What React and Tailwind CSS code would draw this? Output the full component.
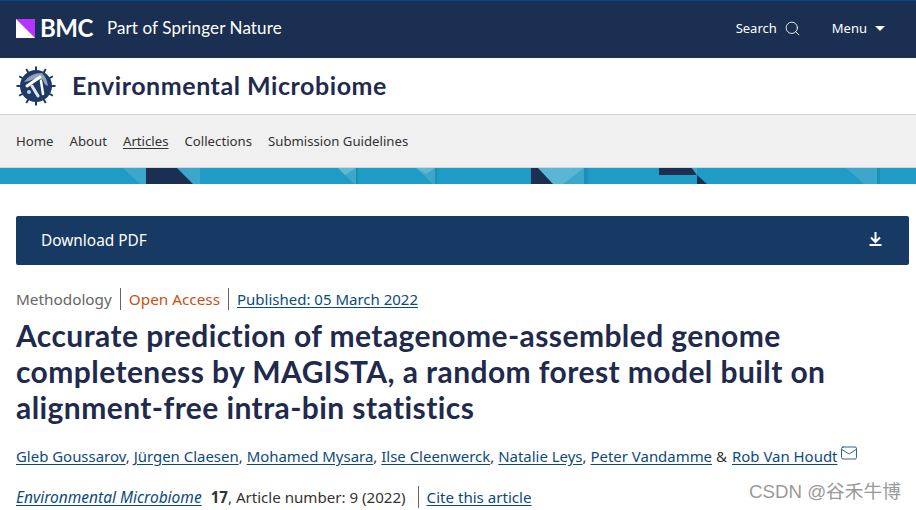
import { Search, Mail } from "lucide-react";

const authors = [
  "Gleb Goussarov",
  "Jürgen Claesen",
  "Mohamed Mysara",
  "Ilse Cleenwerck",
  "Natalie Leys",
];

const body = { fontFamily: "'Noto Sans', sans-serif" };

function Banner() {
  return (
    <svg width="916" height="16" viewBox="0 0 916 16" className="block">
      <rect width="916" height="16" fill="#1e9cc5" />
      <polygon points="123,0 146,0 146,16 140,16" fill="#3ba7cc" />
      <rect x="146" width="54" height="16" fill="#1a2f52" />
      <polygon points="177,0 200,0 200,16 193,16" fill="#3ba7cc" />
      <polygon points="338,0 356,0 356,16 354,16" fill="#3ba7cc" />
      <polygon points="338,0 356,0 345,7" fill="#5fb8d6" />
      <rect x="356" width="2" height="16" fill="#1a90b9" />
      <polygon points="416,0 435,0 435,16 433,16" fill="#3ba7cc" />
      <polygon points="416,0 435,0 426,6" fill="#5fb8d6" />
      <rect x="435" width="2" height="16" fill="#1a90b9" />
      <rect x="531" width="54" height="16" fill="#1a2f52" />
      <polygon points="538,0 585,0 584,16 553,16" fill="#5ab6d5" />
      <polygon points="563,16 584,0 584,16" fill="#3ba7cc" />
      <rect x="584" width="4" height="16" fill="#1a90b9" />
      <polygon points="659,0 692,0 697,7 659,7" fill="#1a2f52" />
      <polygon points="692,0 697,0 697,7" fill="#3ba7cc" />
      <polygon points="697,7 697,16 707,16" fill="#1a2f52" />
      <polygon points="846,0 877,0 877,16 864,16" fill="#3ba7cc" />
      <rect x="877" width="3" height="16" fill="#1a90b9" />
    </svg>
  );
}

function JournalLogo() {
  const teeth = Array.from({ length: 12 }, (_, i) => i * 30);
  return (
    <svg width="40" height="40" viewBox="0 0 40 40">
      {teeth.map((deg) => (
        <rect key={deg} x="19" y="0.5" width="2" height="6" fill="#1f3a66" transform={`rotate(${deg} 20 20)`} />
      ))}
      <circle cx="20" cy="20" r="16" fill="#1f3a66" />
      <path d="M8 16 Q14 7 26 7 Q31 12 32 20 Q28 19 27 14 Q18 12 13 15 Z" fill="#8fa3bf" />
      <path d="M11 20 L24 11" stroke="#fff" strokeWidth="3" strokeLinecap="round" />
      <path d="M16 20 L22 30" stroke="#dfe6ef" strokeWidth="3" strokeLinecap="round" />
      <path d="M25 15 L27 28" stroke="#fff" strokeWidth="2.5" strokeLinecap="round" />
      <circle cx="13" cy="26" r="2" fill="#c4d0df" />
    </svg>
  );
}

export default function App() {
  return (
    <div className="w-[916px] h-[510px] overflow-hidden bg-white relative" style={body}>
      {/* top bar */}
      <div className="h-[58px] bg-[#1a2f52] border-t border-[#004b83] flex items-center justify-between pl-4 pr-[31px] pb-[3px]">
        <div className="flex items-center">
          <svg width="19" height="19" viewBox="0 0 19 19">
            <rect width="19" height="19" fill="#fff" />
            <polygon points="0,0 19,0 19,19" fill="#b833ff" />
          </svg>
          <span className="ml-[5px] text-white text-[24px] font-bold leading-none tracking-[-0.5px]" style={{ fontFamily: "Lato, sans-serif" }}>BMC</span>
          <span className="ml-[14px] text-white text-[17px] tracking-[0.12px]" style={{ fontFamily: "Lato, sans-serif" }}>Part of Springer Nature</span>
        </div>
        <div className="flex items-center text-white text-[13px]">
          <span className="pt-[1px]">Search</span>
          <Search size={17} strokeWidth={1.25} className="ml-[7px]" />
          <span className="ml-[31px] pt-[1px]">Menu</span>
          <span className="ml-[8px] w-0 h-0 border-x-[5px] border-x-transparent border-t-[5px] border-t-white" />
        </div>
      </div>

      {/* journal title */}
      <div className="h-[57px] flex items-center pl-4 border-b border-[#d5d5d5]">
        <JournalLogo />
        <span className="ml-4 text-[25px] font-bold text-[#1f2a4d] tracking-[0.55px]" style={{ fontFamily: "Lato, sans-serif" }}>Environmental Microbiome</span>
      </div>

      {/* nav */}
      <nav className="h-[53px] bg-[#f0f0f0] border-b border-[#d5d5d5] flex items-center gap-4 pl-4 pt-[1px] text-[13.2px] text-[#333]">
        <span>Home</span>
        <span>About</span>
        <span className="underline underline-offset-2">Articles</span>
        <span>Collections</span>
        <span>Submission Guidelines</span>
      </nav>

      <Banner />

      {/* download */}
      <div className="mt-8 ml-4 w-[893px] h-[49px] bg-[#173a64] rounded-[2px] flex items-center justify-between pl-[25px] pr-[27px] text-white text-[15.4px]">
        <span>Download PDF</span>
        <svg width="13" height="14" viewBox="0 0 13 14" fill="none" stroke="#fff" strokeWidth="2" className="-mt-[3px]">
          <path d="M6.5 0 V9 M2 5.5 L6.5 10 L11 5.5 M0.5 13 H12.5" />
        </svg>
      </div>

      {/* article meta */}
      <div className="mt-[23px] ml-4 flex items-center text-[15.3px] leading-[22px]">
        <span className="text-[#666] pr-2 border-r border-[#666]">Methodology</span>
        <span className="text-[#c8500f] px-2 border-r border-[#666]">Open Access</span>
        <span className="ml-2 text-[15px] text-[#0b4a80] underline underline-offset-2">Published: 05 March 2022</span>
      </div>

      <h1 className="mt-[7px] ml-4 w-[870px] text-[30px] leading-[36px] font-bold text-[#1f2a4d] tracking-[0.42px]" style={{ fontFamily: "Lato, sans-serif" }}>
        Accurate prediction of metagenome-assembled genome completeness by MAGISTA, a random forest model built on alignment-free intra-bin statistics
      </h1>

      <div className="mt-[20px] ml-4 flex items-start text-[14.95px] leading-[22px] text-[#333]">
        {authors.map((a) => (
          <span key={a} className="mr-[4px]">
            <span className="text-[#0b4a80] underline underline-offset-2">{a}</span>,
          </span>
        ))}
        <span className="mr-[4px]">
          <span className="text-[#0b4a80] underline underline-offset-2">Peter Vandamme</span>
        </span>
        <span className="mr-[5px]">&amp;</span>
        <span className="text-[#0b4a80] underline underline-offset-2">Rob Van Houdt</span>
        <Mail size={18} strokeWidth={1.25} className="ml-[3px] -mt-[1px] text-[#1a5a96]" />
      </div>

      <div className="mt-[19px] ml-4 flex items-center text-[15.1px] leading-[22px] text-[#333]">
        <span className="italic text-[15.5px] text-[#0b4a80] underline underline-offset-2">Environmental Microbiome</span>
        <span className="ml-[9px] font-bold">17</span>
        <span>, Article number: 9 (2022)</span>
        <span className="ml-3 pl-2 border-l border-[#666]">
          <span className="text-[#0b4a80] underline underline-offset-2">Cite this article</span>
        </span>
      </div>

      {/* watermark */}
      <span className="absolute left-[749px] top-[479px] text-[18.7px] leading-[26px] text-[#9a9a9a]" style={{ fontFamily: "'Liberation Sans', 'Noto Sans CJK SC', sans-serif" }}>CSDN @谷禾牛博</span>
    </div>
  );
}
